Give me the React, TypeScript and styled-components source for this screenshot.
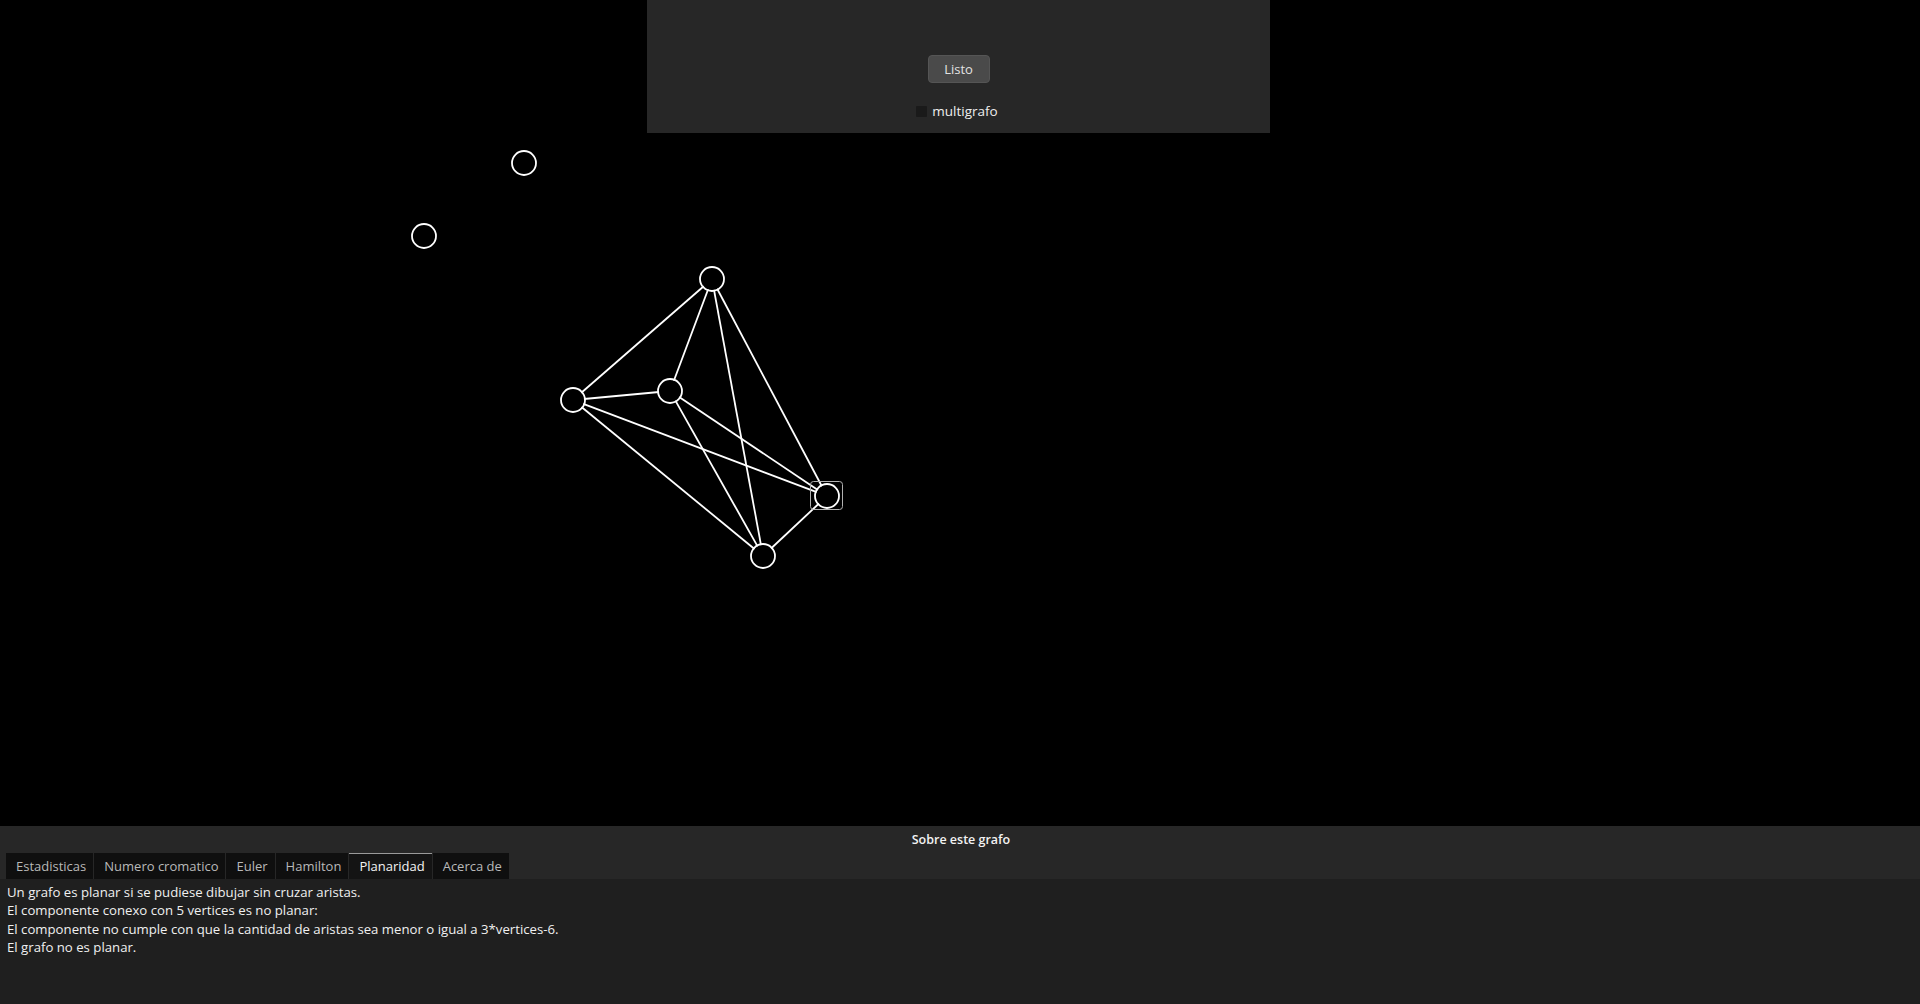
import React from 'react';
import styled, { createGlobalStyle } from 'styled-components';

const GlobalStyle = createGlobalStyle`
  html, body {
    margin: 0;
    padding: 0;
    background: #000;
    overflow: hidden;
  }
  body {
    font-family: "Open Sans", "Noto Sans", "DejaVu Sans", sans-serif;
  }
`;

const Screen = styled.div`
  width: 1920px;
  height: 1004px;
  display: flex;
  flex-direction: column;
  background: #000;
`;

const Canvas = styled.div`
  position: relative;
  height: 826px;
  flex: none;
  background: #000;
`;

const Board = styled.svg`
  display: block;
  width: 100%;
  height: 100%;
`;

const EditPanel = styled.div`
  position: absolute;
  top: 0;
  left: 647px;
  width: 623px;
  height: 133px;
  background: #272727;
  display: flex;
  flex-direction: column;
  align-items: center;
  padding-top: 55px;
  box-sizing: border-box;
`;

const DoneButton = styled.button`
  width: 62px;
  height: 28px;
  border: 1px solid #555;
  border-radius: 4px;
  background: #4a4a4a;
  color: #e2e2e2;
  font-family: "Open Sans", sans-serif;
  font-size: 13px;
  padding: 0;
  cursor: pointer;
`;

const CheckRow = styled.label`
  display: flex;
  align-items: center;
  gap: 5px;
  margin-top: 19px;
  margin-left: -3px;
  color: #eee;
  font-size: 13.5px;
`;

const CheckBox = styled.span`
  width: 11px;
  height: 11px;
  background: #1a1a1a;
  border-radius: 1px;
`;

const InfoPanel = styled.div`
  flex: 1;
  display: flex;
  flex-direction: column;
  background: #1f1f1f;
`;

const InfoTitle = styled.div`
  height: 27px;
  background: #272727;
  color: #f2f2f2;
  font-size: 12.5px;
  font-weight: 600;
  display: flex;
  align-items: center;
  justify-content: center;
  padding-left: 2px;
`;

const TabBar = styled.div`
  height: 26px;
  background: #272727;
  display: flex;
  gap: 1px;
  padding-left: 6px;
`;

const Tab = styled.div<{ $active?: boolean }>`
  display: flex;
  align-items: center;
  padding: 0 7px 1px 10px;
  font-size: 13px;
  background: ${({ $active }) => ($active ? '#141414' : '#0f0f0f')};
  color: ${({ $active }) => ($active ? '#f4f4f4' : '#b9b9b9')};
  border-top: 1px solid ${({ $active }) => ($active ? '#9a9a9a' : 'transparent')};
  box-sizing: border-box;
`;

const InfoBody = styled.div`
  padding: 4px 7px;
  color: #f0f0f0;
  font-size: 13.2px;
  line-height: 18.4px;
`;

type Node = { x: number; y: number };

const nodes: Record<string, Node> = {
  a: { x: 524, y: 163 },
  b: { x: 424, y: 236 },
  c: { x: 712, y: 279 },
  d: { x: 573, y: 400 },
  e: { x: 670, y: 391 },
  f: { x: 827, y: 496 },
  g: { x: 763, y: 556 },
};

const edges: [string, string][] = [
  ['c', 'd'], ['c', 'e'], ['c', 'g'], ['c', 'f'],
  ['d', 'e'], ['d', 'f'], ['d', 'g'],
  ['e', 'f'], ['e', 'g'], ['f', 'g'],
];

const R = 12;

const Edge = ({ from, to }: { from: Node; to: Node }) => {
  const dx = to.x - from.x;
  const dy = to.y - from.y;
  const len = Math.hypot(dx, dy);
  const ux = dx / len;
  const uy = dy / len;
  const k = R - 1;
  return (
    <line
      x1={from.x + ux * k}
      y1={from.y + uy * k}
      x2={to.x - ux * k}
      y2={to.y - uy * k}
      stroke="#fff"
      strokeWidth={1.8}
    />
  );
};

const tabs = ['Estadisticas', 'Numero cromatico', 'Euler', 'Hamilton', 'Planaridad', 'Acerca de'];

const App: React.FC = () => {
  return (
    <>
      <GlobalStyle />
      <Screen>
        <Canvas>
          <Board xmlns="http://www.w3.org/2000/svg">
            {edges.map(([p, q]) => (
              <Edge key={p + q} from={nodes[p]} to={nodes[q]} />
            ))}
            {Object.entries(nodes).map(([id, n]) => (
              <circle key={id} cx={n.x} cy={n.y} r={R} fill="none" stroke="#fff" strokeWidth={1.8} />
            ))}
            <rect x={810.5} y={481.5} width={32} height={28} rx={3} fill="none" stroke="#b0b0b0" strokeWidth={1} />
          </Board>
          <EditPanel>
            <DoneButton>Listo</DoneButton>
            <CheckRow>
              <CheckBox />
              multigrafo
            </CheckRow>
          </EditPanel>
        </Canvas>
        <InfoPanel>
          <InfoTitle>Sobre este grafo</InfoTitle>
          <TabBar>
            {tabs.map((t) => (
              <Tab key={t} $active={t === 'Planaridad'}>
                {t}
              </Tab>
            ))}
          </TabBar>
          <InfoBody>
            Un grafo es planar si se pudiese dibujar sin cruzar aristas.
            <br />
            El componente conexo con 5 vertices es no planar:
            <br />
            El componente no cumple con que la cantidad de aristas sea menor o igual a 3*vertices-6.
            <br />
            El grafo no es planar.
          </InfoBody>
        </InfoPanel>
      </Screen>
    </>
  );
};

export default App;
